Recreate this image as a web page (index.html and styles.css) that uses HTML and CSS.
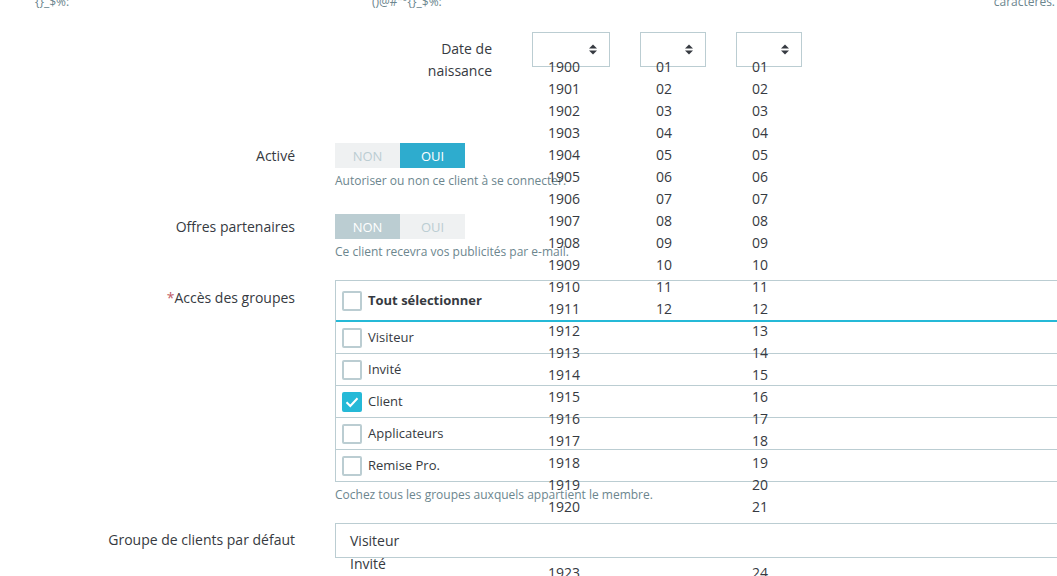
FILE: index.html
```html
<!DOCTYPE html>
<html lang="fr">
<head>
<meta charset="utf-8">
<title>Client</title>
<link rel="stylesheet" href="styles.css">
</head>
<body>
<div class="page">
 <div class="form">
  <div class="top-strip">
    <span class="ts ts-1">{}_$%:</span>
    <span class="ts ts-2">()@#"°{}_$%:</span>
    <span class="ts ts-3">caractères.</span>
  </div>

  <div class="row row-date">
    <div class="label">Date de<br>naissance</div>
    <div class="date-selects">
      <div class="dsel dsel-year">
        <div class="dbox"><svg class="sort" viewBox="0 0 8 11" width="8" height="11"><path d="M0 4.5 L4 0.5 L8 4.5 Z M0 6.5 L8 6.5 L4 10.5 Z"/></svg></div>
        <div class="opts" id="years"></div>
      </div>
      <div class="dsel dsel-sm">
        <div class="dbox"><svg class="sort" viewBox="0 0 8 11" width="8" height="11"><path d="M0 4.5 L4 0.5 L8 4.5 Z M0 6.5 L8 6.5 L4 10.5 Z"/></svg></div>
        <div class="opts">
          <div>01</div><div>02</div><div>03</div><div>04</div><div>05</div><div>06</div>
          <div>07</div><div>08</div><div>09</div><div>10</div><div>11</div><div>12</div>
        </div>
      </div>
      <div class="dsel dsel-sm">
        <div class="dbox"><svg class="sort" viewBox="0 0 8 11" width="8" height="11"><path d="M0 4.5 L4 0.5 L8 4.5 Z M0 6.5 L8 6.5 L4 10.5 Z"/></svg></div>
        <div class="opts">
          <div>01</div><div>02</div><div>03</div><div>04</div><div>05</div><div>06</div>
          <div>07</div><div>08</div><div>09</div><div>10</div><div>11</div><div>12</div>
          <div>13</div><div>14</div><div>15</div><div>16</div><div>17</div><div>18</div>
          <div>19</div><div>20</div><div>21</div><div>22</div><div>23</div><div>24</div>
          <div>25</div><div>26</div>
        </div>
      </div>
    </div>
  </div>

  <div class="row row-switch row-active">
    <div class="label">Activé</div>
    <div class="control">
      <div class="switch">
        <span class="sw">NON</span><span class="sw sw-on-blue">OUI</span>
      </div>
      <p class="help">Autoriser ou non ce client à se connecter.</p>
    </div>
  </div>

  <div class="row row-switch row-offers">
    <div class="label">Offres partenaires</div>
    <div class="control">
      <div class="switch">
        <span class="sw sw-on-grey">NON</span><span class="sw">OUI</span>
      </div>
      <p class="help">Ce client recevra vos publicités par e-mail.</p>
    </div>
  </div>

  <div class="row row-groups">
    <div class="label label-groups"><span class="req">*</span>Accès des groupes</div>
    <div class="control">
      <div class="gtable">
        <div class="grow ghead"><span class="cb"></span><span class="gtext gbold">Tout sélectionner</span></div>
        <div class="grow"><span class="cb"></span><span class="gtext">Visiteur</span></div>
        <div class="grow"><span class="cb"></span><span class="gtext">Invité</span></div>
        <div class="grow"><span class="cb cb-checked"><svg viewBox="0 0 20 20" width="20" height="20"><path d="M4.5 10.2 L8.3 14 L15.5 6.3" fill="none" stroke="#fff" stroke-width="2"/></svg></span><span class="gtext">Client</span></div>
        <div class="grow"><span class="cb"></span><span class="gtext">Applicateurs</span></div>
        <div class="grow"><span class="cb"></span><span class="gtext">Remise Pro.</span></div>
      </div>
      <p class="help">Cochez tous les groupes auxquels appartient le membre.</p>
    </div>
  </div>

  <div class="row row-default">
    <div class="label label-default">Groupe de clients par défaut</div>
    <div class="control">
      <div class="gsel">
        <span class="gsel-val">Visiteur</span>
        <div class="gopts">
          <div>Invité</div><div>Client</div><div>Applicateurs</div>
        </div>
      </div>
    </div>
  </div>
 </div>
</div>
<script>
  var y = document.getElementById('years');
  var h = '';
  for (var i = 1900; i <= 1926; i++) { h += '<div>' + i + '</div>'; }
  y.innerHTML = h;
</script>
</body>
</html>
```

FILE: styles.css
```css
html {
  background: #fff;
}
body {
  margin: 0;
  padding: 0;
  font-family: "Open Sans", "Noto Sans", sans-serif;
  color: #363a41;
  font-size: 14px;
}
.page {
  width: 1057px;
  height: 576px;
  overflow: hidden;
  position: relative;
}
.form {
  width: 1100px;
}
.top-strip {
  display: flex;
  width: 1055px;
  margin-top: -6px;
  height: 17px;
  line-height: 16px;
  font-size: 12px;
  color: #6c868e;
}
.ts-1 { margin-left: 35px; width: 337px; }
.ts-2 { flex: 1; }
.ts-3 { text-align: right; }

.row {
  display: grid;
  grid-template-columns: 295px 1fr;
  column-gap: 40px;
  align-items: start;
}
.label {
  text-align: right;
  line-height: 22px;
  padding-top: 6px;
}
.row-date {
  grid-template-columns: 492px auto;
  margin-top: 21px;
}
.date-selects {
  display: flex;
  gap: 30px;
}
.dsel {
  position: relative;
}
.dbox {
  box-sizing: border-box;
  height: 35px;
  border: 1px solid #bbcdd2;
  display: flex;
  align-items: center;
  justify-content: flex-end;
  padding-right: 12px;
}
.dsel-year .dbox { width: 78px; }
.dsel-sm .dbox { width: 66px; }
.sort { fill: #363a41; }
.opts {
  position: absolute;
  z-index: 1;
  top: 24px;
  left: 16px;
  line-height: 22px;
  font-size: 14px;
  white-space: nowrap;
}

.row-active { margin-top: 61px; }
.row-offers { margin-top: 25px; }
.row-switch .label { padding-top: 2px; }
.switch {
  display: flex;
  width: 130px;
  height: 25px;
}
.sw {
  flex: 1;
  display: flex;
  align-items: center;
  justify-content: center;
  background: #eff1f2;
  color: #bbcdd2;
  font-size: 13px;
}
.sw-on-blue { background: #2eacce; color: #fff; }
.sw-on-grey { background: #bbcdd2; color: #fff; }
.help {
  margin: 4px 0 0;
  font-size: 12px;
  line-height: 17px;
  color: #6c868e;
}

.row-groups { margin-top: 20px; }
.label-groups { padding-top: 7px; }
.req { color: #c05c67; }
.gtable {
  border-top: 1px solid #bbcdd2;
  border-left: 1px solid #bbcdd2;
}
.grow {
  display: flex;
  align-items: center;
  gap: 6px;
  height: 31px;
  padding-left: 6px;
  border-bottom: 1px solid #bbcdd2;
  font-size: 13px;
}
.gtext {
  line-height: 18px;
  margin-top: -2px;
}
.ghead {
  height: 39px;
  border-bottom: 2px solid #25b9d7;
}
.gbold { font-weight: 700; }
.cb {
  box-sizing: border-box;
  width: 20px;
  height: 20px;
  border: 2px solid #bbcdd2;
  border-radius: 2px;
  flex: none;
  display: block;
}
.cb-checked {
  background: #25b9d7;
  border-color: #25b9d7;
  position: relative;
}
.cb-checked svg {
  position: absolute;
  left: -2px;
  top: -2px;
}

.row-default { margin-top: 20px; }
.gsel {
  position: relative;
  z-index: 2;
  box-sizing: border-box;
  height: 35px;
  border: 1px solid #bbcdd2;
  background: #fff;
  padding-left: 14px;
  line-height: 33px;
  font-size: 14px;
}
.gopts {
  position: absolute;
  top: 29px;
  left: 14px;
  line-height: 22px;
}
```
